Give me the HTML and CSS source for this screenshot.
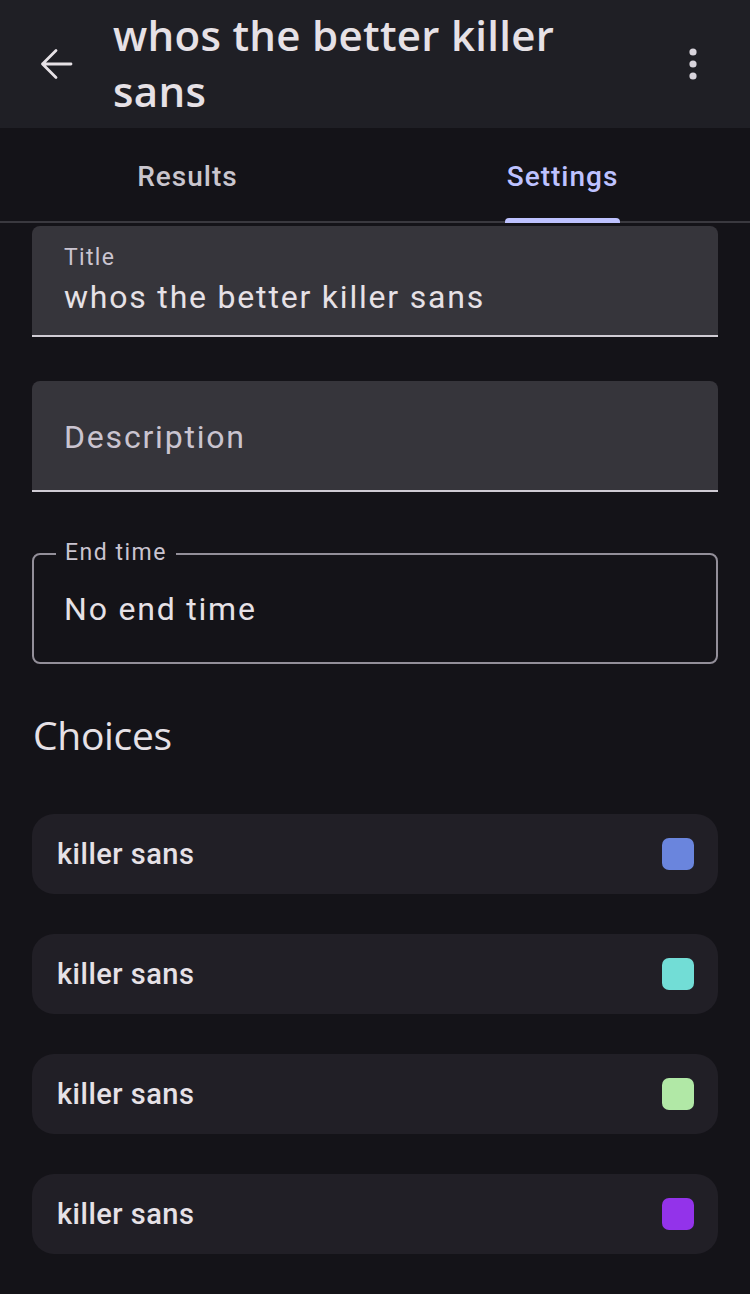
FILE: index.html
```html
<!DOCTYPE html>
<html>
<head>
<meta charset="utf-8">
<link rel="stylesheet" href="styles.css">
</head>
<body>
<div class="app">
  <header class="appbar">
    <div class="icon-btn back">
      <svg width="34" height="34" viewBox="0 0 34 34"><path d="M32 17H3.5M17 3.5L3.5 17L17 30.5" fill="none" stroke="#e6e1e6" stroke-width="2.8" stroke-linecap="round" stroke-linejoin="round"/></svg>
    </div>
    <h1 class="title">whos the better killer sans</h1>
    <div class="icon-btn more">
      <svg width="32" height="32" viewBox="0 0 32 32"><circle cx="16" cy="4" r="3.6" fill="#d8d4dc"/><circle cx="16" cy="16" r="3.6" fill="#d8d4dc"/><circle cx="16" cy="28" r="3.6" fill="#d8d4dc"/></svg>
    </div>
  </header>
  <nav class="tabs">
    <div class="tab">Results</div>
    <div class="tab active">Settings<span class="indicator"></span></div>
  </nav>
  <main class="content">
    <div class="filled-field">
      <div class="label">Title</div>
      <div class="value">whos the better killer sans</div>
    </div>
    <div class="filled-field empty">
      <div class="placeholder">Description</div>
    </div>
    <div class="outlined-field">
      <span class="outline-label">End time</span>
      <div class="value">No end time</div>
    </div>
    <h2 class="section">Choices</h2>
    <div class="choices">
      <div class="choice"><span>killer sans</span><span class="swatch" style="background:#6a85dd"></span></div>
      <div class="choice"><span>killer sans</span><span class="swatch" style="background:#72ddd6"></span></div>
      <div class="choice"><span>killer sans</span><span class="swatch" style="background:#b1e8a6"></span></div>
      <div class="choice"><span>killer sans</span><span class="swatch" style="background:#9333ea"></span></div>
    </div>
  </main>
</div>
</body>
</html>
```
FILE: styles.css
```css
* { box-sizing: border-box; }
html, body { margin: 0; padding: 0; }
body {
  background: #141318;
  font-family: Roboto, "Noto Sans", sans-serif;
  color: #e6e1e6;
  width: 750px;
  height: 1294px;
  overflow: hidden;
}
.app { display: flex; flex-direction: column; }
.appbar {
  height: 128px;
  background: #1f1f25;
  display: flex;
  align-items: center;
  padding: 0 0 0 24px;
}
.icon-btn { width: 64px; height: 64px; display: flex; align-items: center; justify-content: center; flex: none; }
.back { width: 64px; margin-right: 25px; }
.more { margin-left: auto; margin-right: 25px; }
.title {
  margin: 0;
  font-family: "Open Sans", sans-serif;
  font-weight: 600;
  font-size: 42px;
  line-height: 56px;
  letter-spacing: 0.3px;
  color: #e6e1e6;
  width: 490px;
  padding-bottom: 2px;
}
.tabs {
  height: 95px;
  display: flex;
  border-bottom: 2px solid #3a393f;
}
.tab {
  flex: 1;
  position: relative;
  display: flex;
  align-items: center;
  justify-content: center;
  font-size: 28px;
  font-weight: 500;
  letter-spacing: 1px;
  color: #c9c5cd;
  padding-top: 4px;
}
.tab.active { color: #bec2ff; }
.indicator {
  position: absolute;
  bottom: -2px;
  left: 130px;
  width: 115px;
  height: 5px;
  border-radius: 4px 4px 0 0;
  background: #bec2ff;
}
.content { padding: 3px 32px 0 32px; display: flex; flex-direction: column; }
.filled-field {
  height: 111px;
  background: #36353b;
  border-radius: 8px 8px 0 0;
  border-bottom: 2px solid #d0ccd4;
  padding: 17px 32px 0 32px;
}
.filled-field .label { font-size: 23px; color: #cac4d0; line-height: 30px; letter-spacing: 1.3px; }
.filled-field .value { font-size: 32px; line-height: 42px; letter-spacing: 1.8px; color: #e6e1e6; margin-top: 3px; }
.filled-field.empty { margin-top: 44px; display: flex; align-items: center; padding-top: 2px; }
.placeholder { font-size: 32px; color: #cac4d0; letter-spacing: 1.8px; }
.outlined-field {
  margin-top: 61px;
  height: 111px;
  border: 2px solid #938f99;
  border-radius: 8px;
  position: relative;
  display: flex;
  align-items: center;
  padding: 0 30px;
}
.outline-label {
  position: absolute;
  top: -16px;
  left: 22px;
  padding: 0 9px;
  background: #141318;
  font-size: 23px;
  line-height: 28px;
  color: #cac4d0;
  letter-spacing: 1.5px;
}
.outlined-field .value { font-size: 32px; letter-spacing: 1.8px; color: #e6e1e6; }
.section {
  margin: 46px 0 0 1px;
  font-family: "Open Sans", sans-serif;
  font-weight: 400;
  font-size: 39px;
  line-height: 50px;
  letter-spacing: -0.3px;
  color: #e6e1e6;
}
.choices { display: flex; flex-direction: column; gap: 40px; margin-top: 54px; }
.choice {
  height: 80px;
  background: #211f26;
  border-radius: 22px;
  display: flex;
  align-items: center;
  justify-content: space-between;
  padding: 0 24px 0 25px;
  font-size: 29px;
  font-weight: 500;
  letter-spacing: 0.5px;
  color: #e6e1e6;
}
.swatch { width: 32px; height: 32px; border-radius: 7px; }
```
